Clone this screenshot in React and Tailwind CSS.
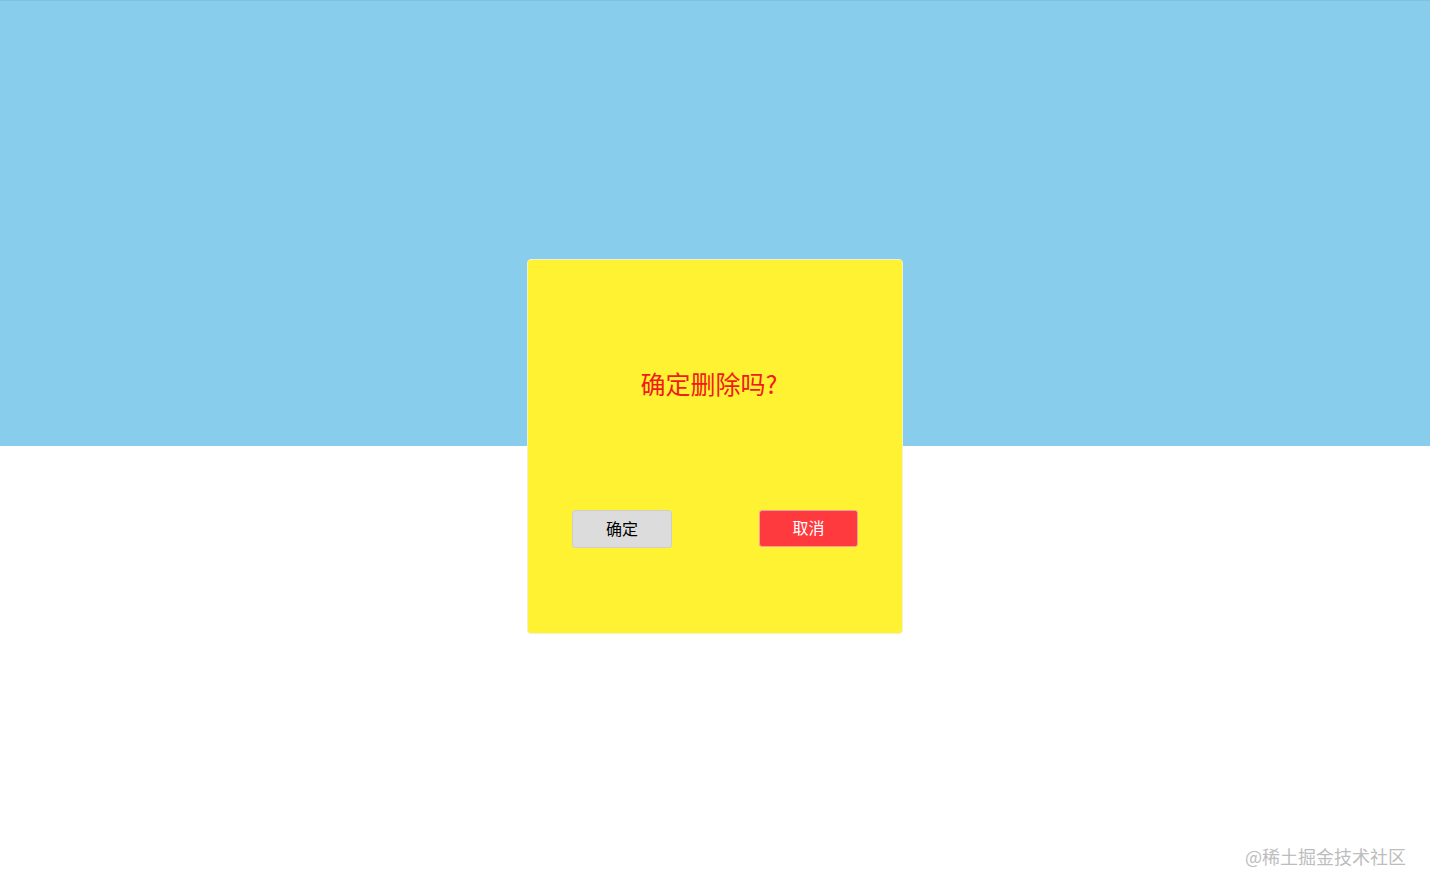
import React from "react";

export default function App() {
  return (
    <div
      className="relative w-full h-[892px] bg-white overflow-hidden"
      style={{ fontFamily: '"Microsoft YaHei", "Noto Sans CJK SC", sans-serif' }}
    >
      {/* top band */}
      <div className="h-[446px] bg-[#88cdeb] border-t border-[#7fc2df]" />

      {/* dialog */}
      <div className="absolute left-[527px] top-[259px] w-[376px] h-[375px] bg-[#fff232] border border-[#f4f0c8] rounded-[4px] flex flex-col">
        <div className="h-[93px]" />
        <p className="text-center text-[25px] leading-[60px] text-[#f21a1a] pr-[12px]">
          确定删除吗?
        </p>
        <div className="h-[97px]" />
        <div className="flex justify-between px-[44px]">
          <button className="w-[100px] h-[38px] bg-[#dcdcdc] border border-[#cfcfc8] rounded-[3px] text-[16px] leading-[16px] pb-[3px] text-black">
            确定
          </button>
          <button className="w-[99px] h-[37px] bg-[#ff3a3f] border border-[#f5a0a0] rounded-[3px] text-[16px] leading-[16px] pb-[3px] text-white">
            取消
          </button>
        </div>
      </div>

      {/* watermark */}
      <div className="absolute right-[24px] top-[843px] text-[18px] text-[#bdbdbd]">
        @稀土掘金技术社区
      </div>
    </div>
  );
}
